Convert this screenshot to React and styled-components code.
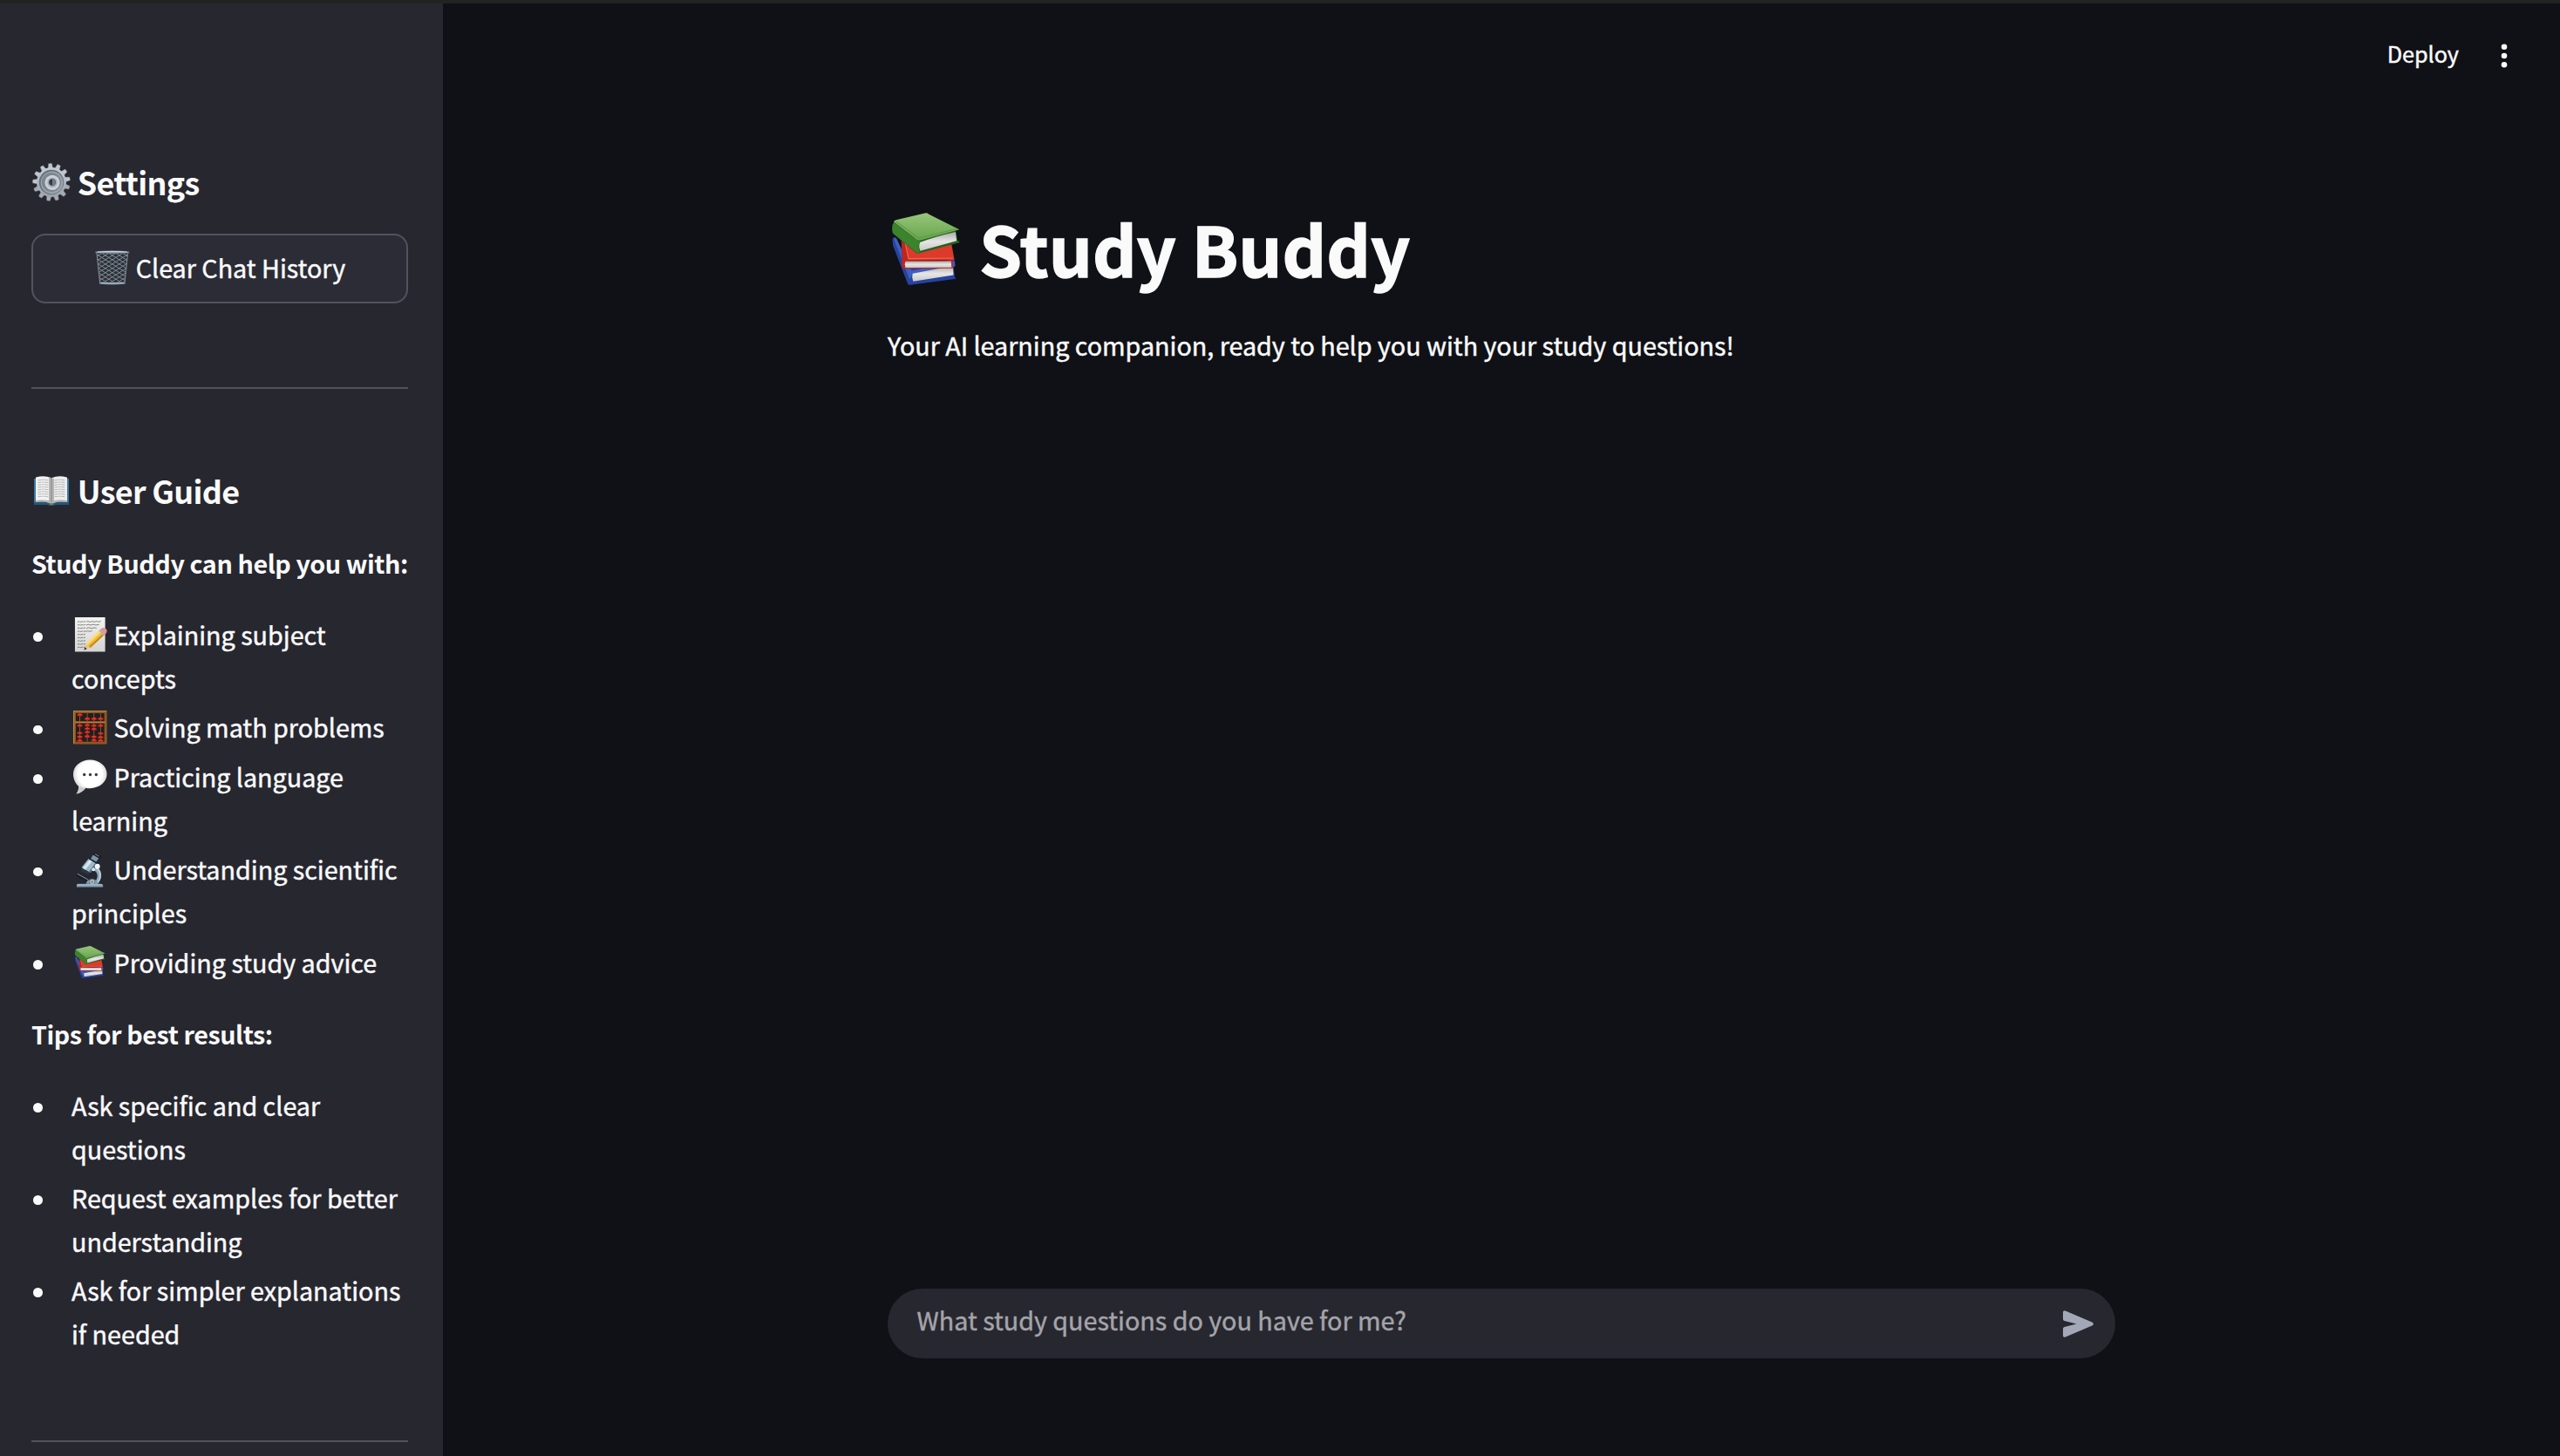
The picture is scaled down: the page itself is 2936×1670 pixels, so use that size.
import React from "react";
import styled, { createGlobalStyle } from "styled-components";

const GlobalStyle = createGlobalStyle`
  *, *::before, *::after { box-sizing: border-box; }
  body {
    margin: 0;
    background: #101116;
    color: #fafafa;
    font-family: "Noto Sans CJK JP", "Noto Sans", sans-serif;
    font-size: 28.7px;
    line-height: 50px;
    -webkit-text-stroke: 0.45px currentColor;
  }
`;

const Page = styled.div`
  display: flex;
  height: 1670px;
  overflow: hidden;
  border-top: 4px solid #222222;
`;

const Sidebar = styled.aside`
  flex: none;
  width: 508px;
  padding: 177px 40px 0 36px;
  background: #272730;
`;

const SectionTitle = styled.h3`
  margin: 0;
  font-size: 35.9px;
  font-weight: 700;
  line-height: 54px;
  letter-spacing: -0.7px;
  white-space: nowrap;
  -webkit-text-stroke-width: 0;
`;

const ClearButton = styled.button`
  display: flex;
  justify-content: center;
  align-items: center;
  width: 100%;
  height: 80px;
  margin: 33px 0 0;
  padding: 0 0 3px;
  border: 2px solid #52535b;
  border-radius: 16px;
  background: #2b2c36;
  color: inherit;
  font: inherit;
  white-space: nowrap;
  -webkit-text-stroke: 0.45px currentColor;
`;

const Divider = styled.hr`
  height: 2px;
  margin: ${(p) => p.$top}px 0 ${(p) => p.$bottom || 0}px;
  border: 0;
  background: #51525a;
`;

const Lead = styled.p`
  margin: ${(p) => p.$top}px 0 32px;
  font-weight: 700;
  letter-spacing: -0.42px;
  white-space: nowrap;
  -webkit-text-stroke-width: 0;
`;

const List = styled.ul`
  display: flex;
  flex-direction: column;
  gap: ${(p) => p.$gap}px;
  margin: 0;
  padding: 0;
  list-style: none;
`;

const Item = styled.li`
  display: flex;
  align-items: flex-start;

  &::before {
    content: "";
    flex: none;
    width: 10.6px;
    height: 10.6px;
    margin: 22.4px 33px 0 2.4px;
    border-radius: 50%;
    background: #fafafa;
  }
`;

const Glyph = styled.svg`
  display: inline-block;
  width: ${(p) => p.$size}px;
  height: ${(p) => p.$size}px;
  margin: 0 ${(p) => p.$right || 0}px 0 ${(p) => p.$left || 0}px;
  vertical-align: -${(p) => p.$drop}px;
  overflow: visible;
`;

const Main = styled.main`
  flex: 1;
  display: flex;
  flex-direction: column;
  align-items: center;
`;

const Header = styled.header`
  display: flex;
  justify-content: flex-end;
  align-items: center;
  gap: 32px;
  align-self: stretch;
  height: 120px;
  padding-right: 44px;
`;

const Deploy = styled.span`
  padding-bottom: 6px;
  font-size: 25.2px;
`;

const MenuIcon = styled.svg`
  width: 40px;
  height: 40px;
  fill: #fafafa;
`;

const Content = styled.section`
  flex: 1;
  width: 1408px;
  padding-top: 108px;
`;

const Title = styled.h1`
  margin: 0;
  font-size: 78.75px;
  font-weight: 700;
  line-height: 105px;
  white-space: nowrap;
  -webkit-text-stroke-width: 1.4px;
`;

const Subtitle = styled.p`
  margin: 34px 0 0;
  letter-spacing: -0.01px;
`;

const ChatInput = styled.div`
  display: flex;
  justify-content: space-between;
  align-items: center;
  width: 1408px;
  height: 80px;
  margin-bottom: 112px;
  padding: 0 25px 0 33.6px;
  border-radius: 40px;
  background: #272730;
`;

const Prompt = styled.span`
  padding-bottom: 8px;
  color: #a4a4a8;
`;

const SendIcon = styled.svg`
  width: 35px;
  height: 31px;
  fill: #a3a8b8;
`;

const range = (n) => Array.from({ length: n }, (_, i) => i);

function Gear() {
  return (
    <Glyph $size={44} $drop={7} $left={1} $right={0.4} viewBox="0 0 44 44" role="img" aria-label="gear">
      <defs>
        <linearGradient id="steel" x1="0" y1="0" x2="0" y2="1">
          <stop offset="0" stopColor="#c3ccd8" />
          <stop offset="1" stopColor="#9aa1ab" />
        </linearGradient>
      </defs>
      {range(13).map((i) => (
        <path key={i} d="M19 7 L20 0.6 Q22 -0.1 24 0.6 L25 7Z" fill={i > 3 && i < 10 ? "#a4abb5" : "#bdc6d2"} stroke="#665f58" strokeWidth="0.4" transform={`rotate(${i * 27.69 - 4} 22 22)`} />
      ))}
      <circle cx="22" cy="22" r="17" fill="url(#steel)" />
      <circle cx="22" cy="22" r="14.2" fill="#666e77" />
      <circle cx="22.5" cy="22.5" r="12.9" fill="#9ba3ab" />
      <circle cx="22" cy="22" r="11" fill="#7c848c" />
      <circle cx="23" cy="22.3" r="8.6" fill="#c9d0d8" />
      <circle cx="23" cy="22.3" r="5.6" fill="#a1a9b2" />
      <circle cx="23" cy="22" r="3.8" fill="#343b46" />
      <path d="M23 18.5a3.5 3.5 0 0 1 0 7z" fill="#6f7e91" />
    </Glyph>
  );
}

function OpenBook() {
  return (
    <Glyph $size={44} $drop={7} $left={1} $right={0.4} viewBox="1 0 44 44" role="img" aria-label="open book">
      <path d="M3 8h40v30H27q-4 2-8 0H3z" fill="#3c79a8" />
      <path d="M3 35h40v3H27q-4 2-8 0H3z" fill="#285678" />
      <path d="M5 6.5Q15 3.8 22.5 7v27Q15 32 5 34.5z" fill="#f2f2f2" />
      <path d="M41 6.5Q31 3.8 23.5 7v27Q31 32 41 34.5z" fill="#eeeeee" />
      <path d="M5 33Q15 31 22.6 34q8-3 18.4-1v2Q31 33.8 26 36h-6Q15 33.8 5 35z" fill="#b6b6b4" />
      <path d="M20 7q3-1 3 1t3-1v26l-3 2-3-2z" fill="#b5b5b5" />
      <path d="M23 7v28" stroke="#777" strokeWidth="0.8" />
      {range(8).map((i) => (
        <g key={i} stroke="#a9a9a9" strokeWidth="0.9" strokeDasharray="4 0.7 2.5 0.6">
          <path d={`M7.5 ${10 + i * 2.7}q6-1.4 12 0`} fill="none" />
          <path d={`M26.5 ${10 + i * 2.7}q6-1.4 12 0`} fill="none" />
        </g>
      ))}
      <path d="M20 36h6l-1.5 2h-3z" fill="#7e8748" />
    </Glyph>
  );
}

function Wastebasket() {
  return (
    <Glyph $size={41.6} $drop={9} viewBox="0 0 42 42" role="img" aria-label="wastebasket">
      <defs>
        <clipPath id="basket"><path d="M3 4h36l-3.4 34H6.4z" /></clipPath>
      </defs>
      <path d="M3 4h36l-3.4 34H6.4z" fill="#2b2f37" />
      <g clipPath="url(#basket)" stroke="#858e98" strokeWidth="1" fill="none">
        {range(15).map((i) => (
          <g key={i}>
            <path d={`M0 ${i * 5 - 26}l42 26`} />
            <path d={`M42 ${i * 5 - 26}l-42 26`} />
          </g>
        ))}
      </g>
      <path d="M3 4l3.6 34M39 4l-3.6 34" stroke="#7d858f" strokeWidth="1.2" />
      <path d="M1.5 2.5q19.5-2 39 0v1.8q-19.5 1.6-39 0z" fill="#8fa3b9" stroke="#4b4b4d" strokeWidth="0.6" />
      <path d="M4 3q17-1.2 34 0" stroke="#d8e4ef" strokeWidth="0.9" fill="none" />
      <path d="M6 37.5q15 1.4 30 0v2.6q-15 1.4-30 0z" fill="#74879c" />
      <path d="M8 39q13 1 26 0" stroke="#c5d4e3" strokeWidth="0.9" fill="none" />
    </Glyph>
  );
}

function Memo() {
  return (
    <Glyph $size={41.6} $drop={9} $right={0.5} viewBox="0 0 42 42" role="img" aria-label="memo">
      <defs>
        <linearGradient id="paper" x1="0" y1="0" x2="0" y2="1">
          <stop offset="0" stopColor="#f3f3f1" />
          <stop offset="1" stopColor="#d4d4d2" />
        </linearGradient>
      </defs>
      <path d="M4 1h35v40H4z" fill="url(#paper)" />
      {range(9).map((i) => (
        <path key={i} d={`M7 ${6.5 + i * 3.7}l2-.7 1 .8 3-.8 1 .6 2-.7`} stroke="#6f6f6d" strokeWidth="0.9" strokeDasharray="3 .6" fill="none" />
      ))}
      <path d="M17 6.3l2-.7 2 .9 3-.8 3 .7 2-.9 2 .8 3-.6M17 10l3-.7 2 .8 3-.8 3 .7 4-.5M17 13.9l3-.9 3 .8 4-.7 2 .6M16 17.6l3-.8 2 .7 3-.9" stroke="#777775" strokeWidth="0.9" fill="none" />
      <path d="M14.4 38.8l2.8-7.6 4.7 5.1z" fill="#e8c28e" />
      <path d="M14.4 38.8l1.2-3.3 2.2 2.3z" fill="#2e2a28" />
      <path d="M17.2 31.2L32.7 16l5.3 5.5L21.9 36.3z" fill="#f3bd3b" />
      <path d="M17.2 31.2L32.7 16l1.7 1.8-15.6 15z" fill="#ffdf78" />
      <path d="M21.9 36.3L38 21.5l-1.5-1.6-16 14.8z" fill="#c48b21" />
      <path d="M31.8 16.8l1.7-1.7 5.4 5.7-1.7 1.6z" fill="#a9b3ae" />
      <path d="M33.4 15.1q2.4-2.8 4.8-1.6 4 2 2.4 5.4l-1.7 2z" fill="#ea8f96" />
    </Glyph>
  );
}

function Abacus() {
  const beads = [
    [8, [6, 18.5, 27, 31.5, 36]],
    [17, [10.5, 18, 22, 26, 31]],
    [25, [10.5, 18.5, 22.5, 31.5, 35.5]],
    [33, [10.5, 18.5, 27.5, 32, 36]],
  ];
  return (
    <Glyph $size={41.6} $drop={9} $right={0.5} viewBox="0 0 42 42" role="img" aria-label="abacus">
      <path d="M2 1h39v39H2z" fill="#8b5a22" />
      <path d="M2 1h39l-1 1.2H3.2V39L2 40z" fill="#bd8340" />
      <path d="M5 4h33v9.5H5zM5 16h33v21H5z" fill="#261c1d" />
      {beads.map(([x, ys], k) => (
        <g key={k} transform={`translate(${1.6 - k * 0.3} 0)`}>
          <path d={`M${x} 4v9.5M${x} 16v21`} stroke="#8d6b55" strokeWidth="0.8" />
          {ys.map((y) => (
            <g key={y}>
              <ellipse cx={x} cy={y} rx="3.2" ry="1.6" fill="#c0241a" />
              <ellipse cx={x} cy={y - 0.5} rx="2.2" ry="0.6" fill="#e84434" />
            </g>
          ))}
        </g>
      ))}
      <path d="M4 14.6h35" stroke="#ba7c36" strokeWidth="1.3" />
    </Glyph>
  );
}

function SpeechBubble() {
  return (
    <Glyph $size={41.6} $drop={9} $right={0.5} viewBox="0 0 42 42" role="img" aria-label="speech balloon">
      <defs>
        <radialGradient id="balloon" cx="0.5" cy="0.42" r="0.56">
          <stop offset="0.65" stopColor="#ffffff" />
          <stop offset="1" stopColor="#c4c4c6" />
        </radialGradient>
      </defs>
      <path d="M21.5 1.5C32 1.5 41 8.5 41 18S32 34.5 21.5 34.5c-1.7 0-3.4-.1-5-.5C13.5 37.5 10 40.4 5.6 40.8c1.7-2 2.9-4.9 2.6-8.8C4.3 29 2 23.5 2 18 2 8.5 11 1.500 21.500 1.500z" fill="url(#balloon)" />
      <path d="M8.3 32q3.5 2 8.2 2C13.5 37.5 10 40.4 5.6 40.8c1.700-2 2.900-4.900 2.700-8.800z" fill="#cacacb" />
      <circle cx="14.8" cy="18.7" r="1.700" fill="#3a3a3c" />
      <circle cx="21.7" cy="18.7" r="1.700" fill="#3a3a3c" />
      <circle cx="28.6" cy="18.7" r="1.700" fill="#3a3a3c" />
    </Glyph>
  );
}

function Microscope() {
  return (
    <Glyph $size={41.6} $drop={9} $right={0.5} viewBox="0 0 42 42" role="img" aria-label="microscope">
      <path d="M28 17c8 3 9 15 1 21h-6c8-5 9-12 4-16z" fill="#8fa9bc" />
      <path d="M29 18.5c5 4 6 12 1 17.5" stroke="#c0d2df" strokeWidth="1.5" fill="none" />
      <path d="M6 26l13 7.5-1 2.3-12-7.5z" fill="#18212a" />
      <path d="M8 34.5l7-1.5 4 3.5-11 1z" fill="#202831" />
      <path d="M7 25.5l12.5 7" stroke="#8498a7" strokeWidth="1" />
      <path d="M17 37c0-7 14-7 14 0z" fill="#879eaf" />
      <circle cx="24" cy="34.8" r="3.3" fill="#aebdc8" stroke="#576c7c" strokeWidth="0.9" />
      <circle cx="24" cy="34.8" r="1" fill="#5c6b76" />
      <path d="M6 38.5q0-1.5 2-1.5h26q2.5 0 2.5 2v2H6z" fill="#7f99ab" />
      <path d="M6.5 38.3h29" stroke="#bdd0dd" strokeWidth="0.9" />
      <path d="M12 18.5l9.5 5.5-2.5 2.5-8.5-4z" fill="#2a3641" />
      <path d="M20 7.5l10 6-8 10.8-10.3-6z" fill="#9db7c9" />
      <path d="M21.5 8.5l3 1.8-8.5 10.5-3-1.9z" fill="#d6e5ef" />
      <path d="M28 12.5l2 1.2-8 10.6-1.8-1.1z" fill="#556b7b" />
      <path d="M21 6.5l10.5 6-1.4 1.8-10.500-6z" fill="#18222c" />
      <path d="M25 3.5l6.5 3.7-2.8 4.5-6.400-3.700z" fill="#7c93a4" />
      <path d="M26 .8l8.5 4.7-1.6 2.3L24.5 3z" fill="#141b23" />
      <path d="M27 2.5l5 2.8" stroke="#9dafbc" strokeWidth="0.8" />
      <circle cx="30" cy="17" r="3" fill="#f2f7fa" />
      <circle cx="25.5" cy="20.5" r="2" fill="#dbe7ef" />
    </Glyph>
  );
}

function Books({ size = 41.6, drop = 9, right = 0.5, viewBox = "0 0 42 42" }) {
  const id = `cover${Math.round(size)}`;
  return (
    <Glyph $size={size} $drop={drop} $right={right} viewBox={viewBox} role="img" aria-label="books">
      <defs>
        <linearGradient id={id} x1="0.5" y1="0" x2="0.5" y2="1">
          <stop offset="0" stopColor="#97c67b" />
          <stop offset="1" stopColor="#68a44c" />
        </linearGradient>
        <linearGradient id={`${id}p`} x1="0" y1="0" x2="0" y2="1">
          <stop offset="0" stopColor="#a9a9a9" />
          <stop offset="0.5" stopColor="#e6e6e6" />
          <stop offset="1" stopColor="#c8c8c8" />
        </linearGradient>
      </defs>
      <path d="M4 16q0-1.500 1.500-1.500L12 31l24-5 .8 3.500-1 .9.700 5 .7.800-23.800 3.200q-1.400 0-1.700-1.300L4.300 19z" fill="#26439f" />
      <path d="M4.600 15.200L6 15l8 17L36.500 27v2.500l-22 4.200-1.500 3z" fill="#3d5fc0" />
      <path d="M14.500 33.500l21-4 .3 4.800-21 3.300q-.9-2-.3-4.100z" fill={`url(#${id}p)`} />
      <path d="M8.600 13.500L12 26.600l24.300-.2-1.500-8z" fill="#dc3a2b" />
      <path d="M8.600 13.500L10 14l2 12.500 23.200.2.300 3.700.7.400-25.700.2q-1.500 0-1.600-1.500z" fill="#b92720" />
      <path d="M10.300 16l2.100 9.700 23-.3" fill="none" stroke="#f06553" strokeWidth="0.5" />
      <path d="M10.800 27.100q12 .2 23.700-.1l.3 3.300-24 .1q-.8-1.700 0-3.300z" fill={`url(#${id}p)`} />
      <path d="M4.100 7.700q-.7 3.400.1 4.900L16.300 22.700q.8.500 1.900.1l20.700-5.400v-.8l-1-.3-1-5.300 1.800-.4-2-1L17 16z" fill="#28641f" />
      <path d="M18.300 17.300q8-3.100 18.600-5.500l.5 4.700-18.900 5.200q-1-2.200-.2-4.400z" fill={`url(#${id}p)`} />
      <path d="M4.700 6.600q0-.6 1.200-1L21 2q1-.2 2 .6l15.800 8-20.500 5.600q-1 .2-1.600-.3z" fill={`url(#${id})`} />
      <path d="M4.700 6.600l12 9.300q.8.500 1.800.2l-.5 1.200q-.8 2.500.3 5.100-1 .5-2-.2L4.300 12.500q-.8-3 .4-5.900z" fill="#3b832d" />
      <path d="M5.800 6.300l12 8.800 20-5" fill="none" stroke="#5c9c42" strokeWidth="0.5" />
    </Glyph>
  );
}

const TOPICS = [
  [Memo, "Explaining subject concepts"],
  [Abacus, "Solving math problems"],
  [SpeechBubble, "Practicing language learning"],
  [Microscope, "Understanding scientific principles"],
  [Books, "Providing study advice"],
];

const TIPS = [
  "Ask specific and clear questions",
  "Request examples for better understanding",
  "Ask for simpler explanations if needed",
];

export default function App() {
  return (
    <>
      <GlobalStyle />
      <Page>
        <Sidebar>
          <SectionTitle><Gear /> Settings</SectionTitle>
          <ClearButton type="button">
            <span><Wastebasket /> Clear Chat History</span>
          </ClearButton>
          <Divider $top={96} $bottom={89} />
          <SectionTitle><OpenBook /> User Guide</SectionTitle>
          <Lead $top={32}>Study Buddy can help you with:</Lead>
          <List $gap={6.4}>
            {TOPICS.map(([Icon, label]) => (
              <Item key={label}>
                <span><Icon /> {label}</span>
              </Item>
            ))}
          </List>
          <Lead $top={32.4}>Tips for best results:</Lead>
          <List $gap={6}>
            {TIPS.map((tip) => (
              <Item key={tip}><span>{tip}</span></Item>
            ))}
          </List>
          <Divider $top={97} />
        </Sidebar>
        <Main>
          <Header>
            <Deploy>Deploy</Deploy>
            <MenuIcon viewBox="0 0 40 40" aria-hidden="true">
              <circle cx="20" cy="9.8" r="3.3" />
              <circle cx="20" cy="20" r="3.3" />
              <circle cx="20" cy="30.2" r="3.3" />
            </MenuIcon>
          </Header>
          <Content>
            <Title><Books size={87} drop={8.6} right={0} viewBox="1.5 0 39.5 39.5" /> Study Buddy</Title>
            <Subtitle>Your AI learning companion, ready to help you with your study questions!</Subtitle>
          </Content>
          <ChatInput>
            <Prompt>What study questions do you have for me?</Prompt>
            <SendIcon viewBox="0 0 35 31" aria-label="Send">
              <path d="M0 2.3Q0-.4 2.800.5L33.800 13.700Q36 15.500 33.800 17.300L2.800 30.500Q0 31.400 0 28.700V21Q0 19.400 1.600 19L15.500 15.500L1.600 12Q0 11.600 0 10Z" />
            </SendIcon>
          </ChatInput>
        </Main>
      </Page>
    </>
  );
}
